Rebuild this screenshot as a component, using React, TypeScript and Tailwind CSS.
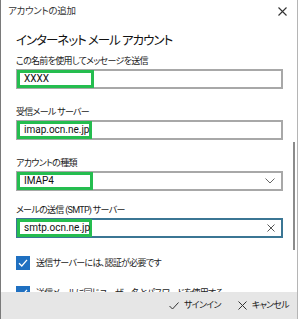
import React from "react";

const jp = "font-['Roboto','Noto_Sans_CJK_JP',sans-serif] [font-feature-settings:'palt']";

function Highlight({ w, children }: { w: number; children?: React.ReactNode }) {
  // green annotation frame drawn over the field value
  return (
    <div
      className="absolute left-[-1px] top-[-1px] bottom-[-1px] border-[3px] border-[#25bd4f] flex items-center pl-[4px]"
      style={{ width: w }}
    >
      {children}
    </div>
  );
}

function Field({
  label,
  value,
  green,
  mt,
  focused,
  right,
}: {
  label: string;
  value: string;
  green: number;
  mt: string;
  focused?: boolean;
  right?: React.ReactNode;
}) {
  return (
    <div className={mt}>
      <div className="text-[9px] tracking-[-0.7px] leading-[16px] text-[#1b1b1b]">{label}</div>
      <div
        className={
          "relative h-[20px] border-2 flex items-center justify-end pr-[6px] " +
          (focused ? "border-[#3b7694]" : "border-[#a8a8a8]")
        }
      >
        <Highlight w={green}>
          <span className="text-[10px] leading-none text-[#111]">{value}</span>
          {focused && <span className="ml-[1px] w-[1px] h-[12px] bg-[#111]" />}
        </Highlight>
        {right}
      </div>
    </div>
  );
}

function Check({ label }: { label: string }) {
  return (
    <div className="flex items-center gap-[6px]">
      <div className="w-[14px] h-[14px] bg-[#1f70c1] flex items-center justify-center">
        <svg width="10" height="10" viewBox="0 0 10 10">
          <polyline points="1,5.2 3.8,8 9,1.8" fill="none" stroke="white" strokeWidth="1.3" />
        </svg>
      </div>
      <span className="text-[9px] tracking-[-0.7px] leading-[16px] text-[#1b1b1b]">{label}</span>
    </div>
  );
}

export default function App() {
  return (
    <div className={"w-[298px] h-[319px] bg-white flex flex-col overflow-hidden border-l border-[#7a7a7a] border-r border-r-[#b5b5b5] " + jp}>
      {/* title bar */}
      <div className="h-[22px] shrink-0 flex items-center justify-between pl-[7px] pr-[10px]">
        <span className="text-[9.5px] tracking-[-0.3px] text-[#333]">アカウントの追加</span>
        <svg width="9" height="9" viewBox="0 0 9 9">
          <path d="M0.5 0.5 L8.5 8.5 M8.5 0.5 L0.5 8.5" stroke="#333" strokeWidth="1.1" />
        </svg>
      </div>

      {/* content */}
      <div className="relative flex-1 overflow-hidden pl-[15px] pr-[14px]">
        <h1 className="mt-[9px] text-[12.5px] tracking-[-1px] leading-[20px] text-[#111]">インターネット メール アカウント</h1>

        <Field label="この名前を使用してメッセージを送信" value="XXXX" green={77} mt="mt-[2px]" />
        <Field label="受信メール サーバー" value="imap.ocn.ne.jp" green={75} mt="mt-[15px]" />
        <Field
          label="アカウントの種類"
          value="IMAP4"
          green={76}
          mt="mt-[15px]"
          right={
            <svg width="10" height="6" viewBox="0 0 10 6">
              <polyline points="0.5,0.5 5,5 9.5,0.5" fill="none" stroke="#666" strokeWidth="1" />
            </svg>
          }
        />
        <Field
          label="メールの送信 (SMTP) サーバー"
          value="smtp.ocn.ne.jp"
          green={75}
          mt="mt-[11px]"
          focused
          right={
            <svg width="8" height="8" viewBox="0 0 8 8">
              <path d="M0.5 0.5 L7.5 7.5 M7.5 0.5 L0.5 7.5" stroke="#555" strokeWidth="1" />
            </svg>
          }
        />

        <div className="mt-[17px]">
          <Check label="送信サーバーには、認証が必要です" />
        </div>
        <div className="mt-[14px]">
          <Check label="送信メールに同じユーザー名とパスワードを使用する" />
        </div>

        {/* scrollbar thumb */}
        <div className="absolute right-[2px] top-[120px] w-[2px] h-[108px] bg-[#8c8c8c]" />
      </div>

      {/* footer */}
      <div className="h-[27px] shrink-0 bg-[#e6e6e6] flex items-center justify-end gap-[17px] pr-[8px]">
        <div className="flex items-center gap-[5px]">
          <svg width="10" height="8" viewBox="0 0 10 8">
            <polyline points="0.5,4 3.5,7 9.5,0.5" fill="none" stroke="#333" strokeWidth="1" />
          </svg>
          <span className="text-[9px] tracking-[-0.7px] text-[#1b1b1b]">サインイン</span>
        </div>
        <div className="flex items-center gap-[5px]">
          <svg width="9" height="9" viewBox="0 0 9 9">
            <path d="M0.5 0.5 L8.5 8.5 M8.5 0.5 L0.5 8.5" stroke="#333" strokeWidth="1" />
          </svg>
          <span className="text-[9px] tracking-[-0.7px] text-[#1b1b1b]">キャンセル</span>
        </div>
      </div>
    </div>
  );
}
